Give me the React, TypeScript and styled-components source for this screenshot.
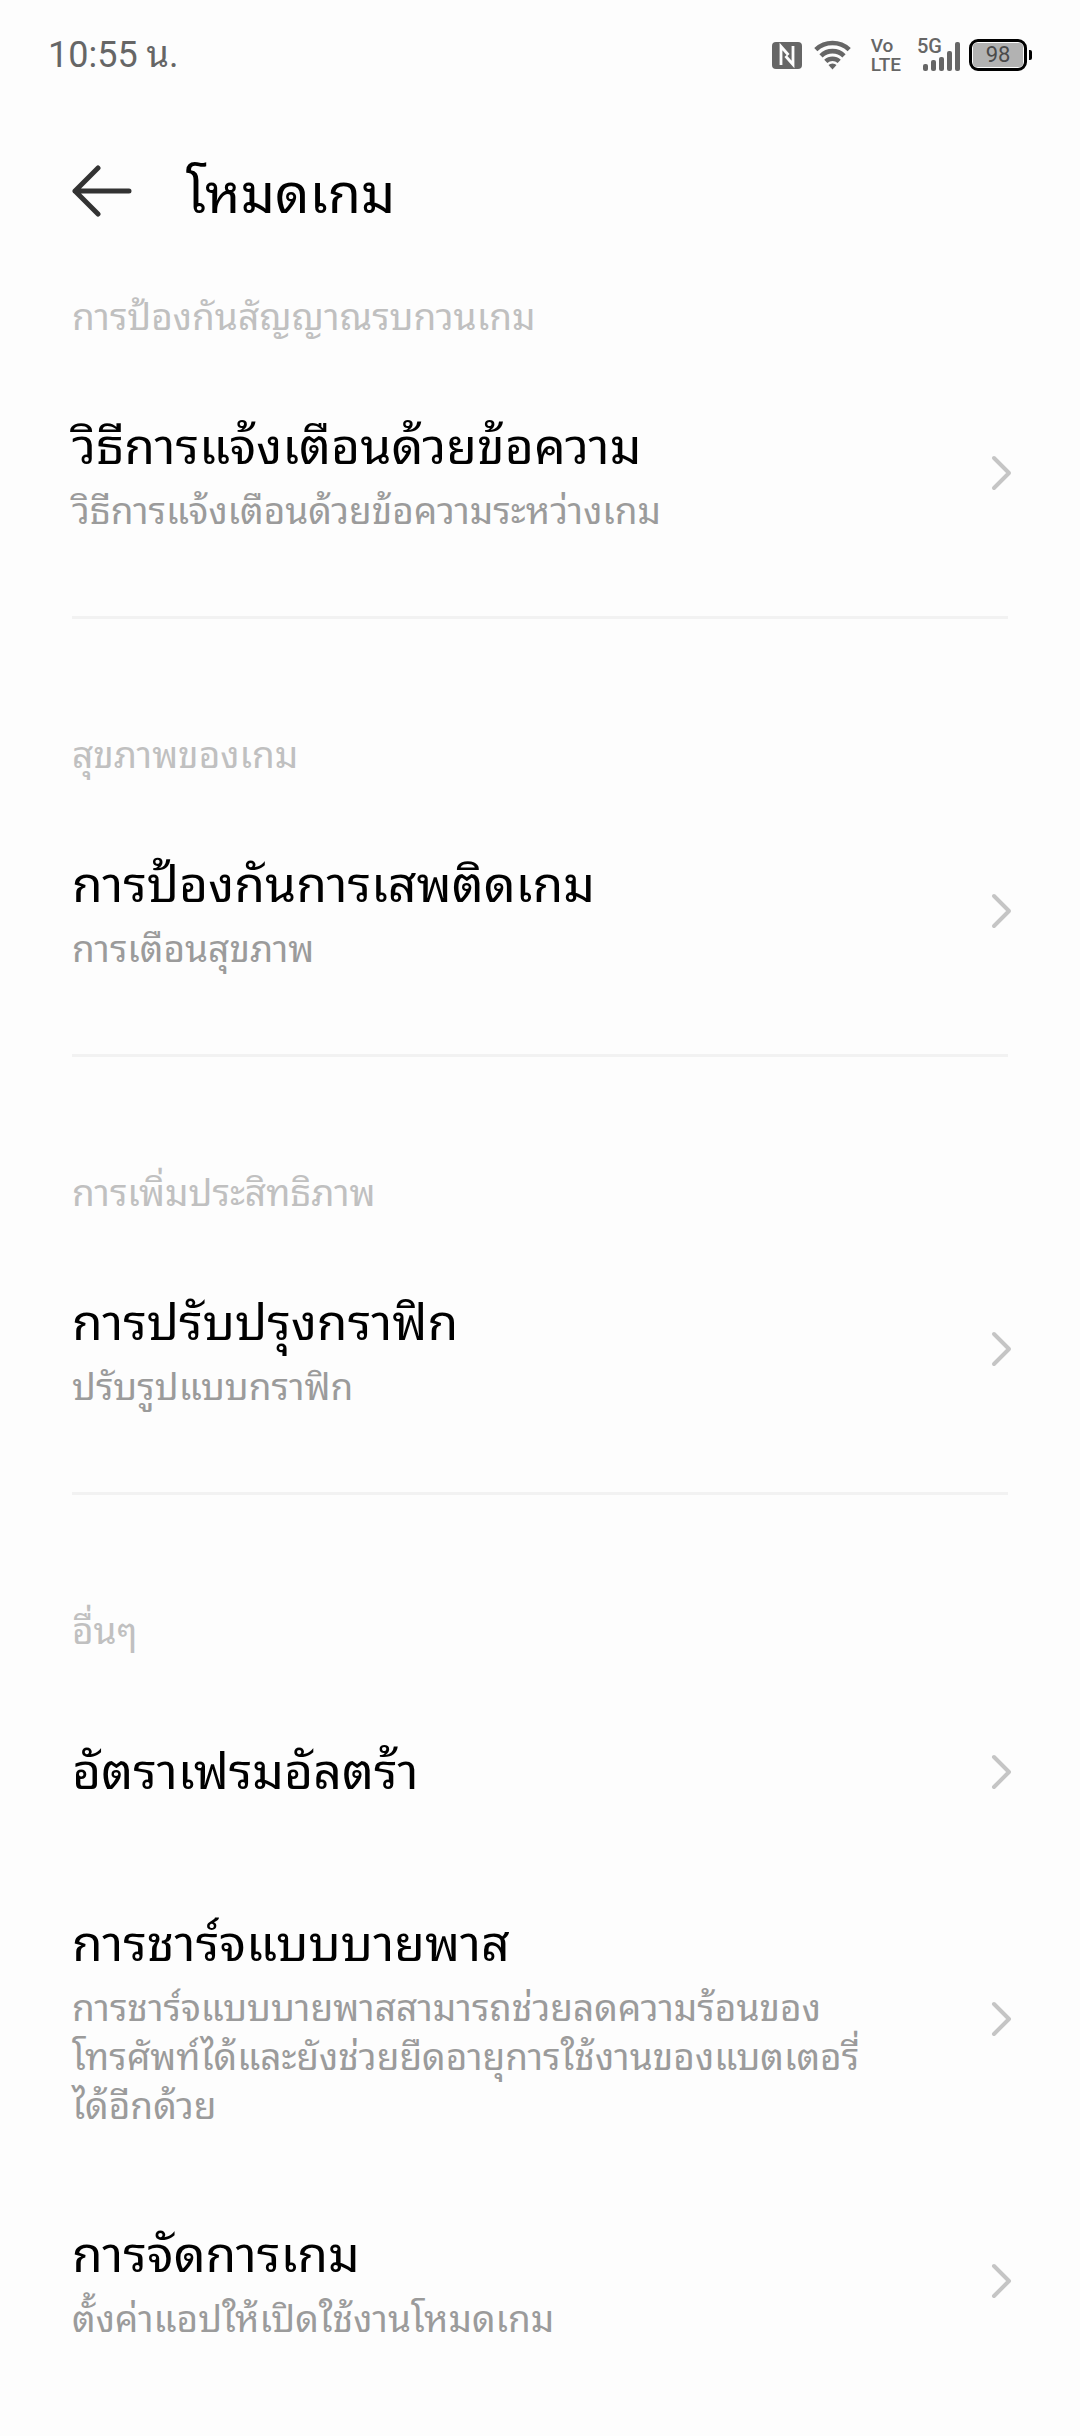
import React from 'react';
import styled, { createGlobalStyle } from 'styled-components';

const GlobalStyle = createGlobalStyle`
  *, *::before, *::after { box-sizing: border-box; }
  body {
    margin: 0;
    background: #fdfdfd;
    color: #000;
    font-family: Roboto, "Noto Sans Thai Looped", "Noto Sans Thai", sans-serif;
  }
`;

const StatusBar = styled.div`
  display: flex;
  align-items: center;
  justify-content: space-between;
  height: 110px;
  padding: 0 48px;
  color: #666;
`;

const Clock = styled.time`
  font-size: 36px;
  line-height: 48px;
`;

const StatusIcons = styled.div`
  display: flex;
  align-items: center;
  height: 32px;
`;

const NfcSvg = styled.svg`
  display: block;
  margin-right: 12px;
`;

const WifiSvg = styled.svg`
  display: block;
  margin-right: 20px;
`;

const VoLte = styled.div`
  display: flex;
  flex-direction: column;
  margin-right: 17px;
  font-size: 19px;
  font-weight: 500;
  line-height: 19px;
`;

const Signal = styled.div`
  position: relative;
  width: 42px;
  height: 32px;
  margin-right: 9px;
`;

const NetworkType = styled.span`
  position: absolute;
  top: -3px;
  left: -1px;
  font-size: 20px;
  font-weight: 500;
  line-height: 20px;
`;

const Battery = styled.div`
  display: flex;
  align-items: center;
`;

const BatteryCase = styled.div`
  width: 58px;
  height: 32px;
  padding: 1px;
  border: 3px solid #000;
  border-radius: 9px;
`;

const BatteryLevel = styled.div`
  height: 24px;
  border-radius: 4px;
  background: #b2b2b2;
  color: #4a4a4a;
  font-size: 22px;
  line-height: 24px;
  text-align: center;
`;

const BatteryTip = styled.div`
  width: 3px;
  height: 10px;
  margin-left: 2px;
  border-radius: 0 2px 2px 0;
  background: #000;
`;

const Header = styled.header`
  display: flex;
  align-items: center;
  gap: 54px;
  height: 170px;
  padding: 0 72px;
`;

const BackButton = styled.button`
  display: block;
  padding: 0;
  border: 0;
  background: none;
  cursor: pointer;
  svg { display: block; }
`;

const PageTitle = styled.h1`
  margin: 0;
  font-size: 54px;
  font-weight: 400;
  line-height: 80px;
`;

const Settings = styled.main`
  display: flex;
  flex-direction: column;
  gap: 112px;
  padding: 13px 0 48px;
`;

const Section = styled.section`
  display: flex;
  flex-direction: column;
`;

const SectionLabel = styled.h2`
  margin: 0 72px 24px;
  color: #c0c0c0;
  font-size: 37px;
  font-weight: 400;
  line-height: 49px;
`;

const Row = styled.a`
  display: flex;
  align-items: center;
  gap: 96px;
  min-height: 183px;
  padding: 43px 66px 43px 72px;
  color: inherit;
  text-decoration: none;
`;

const RowText = styled.div`
  display: flex;
  flex: 1;
  flex-direction: column;
  gap: 2px;
  min-width: 0;
`;

const RowTitle = styled.span`
  font-size: 50px;
  line-height: 76px;
`;

const RowSummary = styled.span`
  color: #9b9b9b;
  font-size: 37px;
  line-height: 49px;
`;

const ChevronSvg = styled.svg`
  display: block;
  flex: none;
`;

const Divider = styled.hr`
  height: 3px;
  margin: 37px 72px 0;
  border: 0;
  background: #f2f2f2;
`;

interface Item {
  title: string;
  summary?: string;
}

interface Group {
  label: string;
  items: Item[];
}

const groups: Group[] = [
  {
    label: 'การป้องกันสัญญาณรบกวนเกม',
    items: [{ title: 'วิธีการแจ้งเตือนด้วยข้อความ', summary: 'วิธีการแจ้งเตือนด้วยข้อความระหว่างเกม' }],
  },
  {
    label: 'สุขภาพของเกม',
    items: [{ title: 'การป้องกันการเสพติดเกม', summary: 'การเตือนสุขภาพ' }],
  },
  {
    label: 'การเพิ่มประสิทธิภาพ',
    items: [{ title: 'การปรับปรุงกราฟิก', summary: 'ปรับรูปแบบกราฟิก' }],
  },
  {
    label: 'อื่นๆ',
    items: [
      { title: 'อัตราเฟรมอัลตร้า' },
      {
        title: 'การชาร์จแบบบายพาส',
        summary:
          'การชาร์จแบบบายพาสสามารถช่วยลดความร้อนของโทรศัพท์ได้และยังช่วยยืดอายุการใช้งานของแบตเตอรี่ได้อีกด้วย',
      },
      { title: 'การจัดการเกม', summary: 'ตั้งค่าแอปให้เปิดใช้งานโหมดเกม' },
    ],
  },
];

const signalBars = [7, 11, 14, 20, 29];

function NfcIcon() {
  return (
    <NfcSvg width="30" height="27" viewBox="0 0 30 27" aria-hidden="true">
      <rect width="30" height="27" rx="4" fill="#666" />
      <path d="M9 23V4.500l7.500 8.500M21 4v18.500L13.500 14" fill="none" stroke="#fdfdfd" strokeWidth="2.800" />
    </NfcSvg>
  );
}

function WifiIcon() {
  return (
    <WifiSvg width="37" height="30" viewBox="0 0 37 30" fill="none" stroke="#666" strokeWidth="4.600" aria-hidden="true">
      <path d="M1.800 9.600a24.500 24.500 0 0 1 33.400 0" />
      <path d="M7 15.800a16.500 16.500 0 0 1 23 0" />
      <path d="M11.800 21.400a9.800 9.800 0 0 1 13.400 0" />
      <path d="M14.500 25a5.800 5.800 0 0 1 8 0l-4 4.600z" fill="#666" stroke="none" />
    </WifiSvg>
  );
}

function Chevron() {
  return (
    <ChevronSvg width="24" height="40" viewBox="0 0 24 40" fill="none" aria-hidden="true">
      <path d="M4 5l15 15L4 35" stroke="#c5c5c5" strokeWidth="4" strokeLinecap="round" strokeLinejoin="round" />
    </ChevronSvg>
  );
}

export default function App() {
  return (
    <>
      <GlobalStyle />
      <StatusBar>
        <Clock>10:55 น.</Clock>
        <StatusIcons>
          <NfcIcon />
          <WifiIcon />
          <VoLte>
            <span>Vo</span>
            <span>LTE</span>
          </VoLte>
          <Signal>
            <svg width="42" height="32" viewBox="0 0 42 32" aria-hidden="true">
              {signalBars.map((h, i) => (
                <rect key={h} x={5 + i * 8} y={32 - h} width="5" height={h} rx="2" fill="#666" />
              ))}
            </svg>
            <NetworkType>5G</NetworkType>
          </Signal>
          <Battery>
            <BatteryCase>
              <BatteryLevel>98</BatteryLevel>
            </BatteryCase>
            <BatteryTip />
          </Battery>
        </StatusIcons>
      </StatusBar>
      <Header>
        <BackButton type="button" aria-label="ย้อนกลับ">
          <svg width="60" height="60" viewBox="0 0 60 60" fill="none" stroke="#333" strokeWidth="5" strokeLinecap="round" strokeLinejoin="round">
            <path d="M57 26H3M26 3L3 26l23 23" />
          </svg>
        </BackButton>
        <PageTitle>โหมดเกม</PageTitle>
      </Header>
      <Settings>
        {groups.map((group, i) => (
          <Section key={group.label}>
            <SectionLabel>{group.label}</SectionLabel>
            {group.items.map((item) => (
              <Row key={item.title} href="#">
                <RowText>
                  <RowTitle>{item.title}</RowTitle>
                  {item.summary && <RowSummary>{item.summary}</RowSummary>}
                </RowText>
                <Chevron />
              </Row>
            ))}
            {i < groups.length - 1 && <Divider />}
          </Section>
        ))}
      </Settings>
    </>
  );
}
